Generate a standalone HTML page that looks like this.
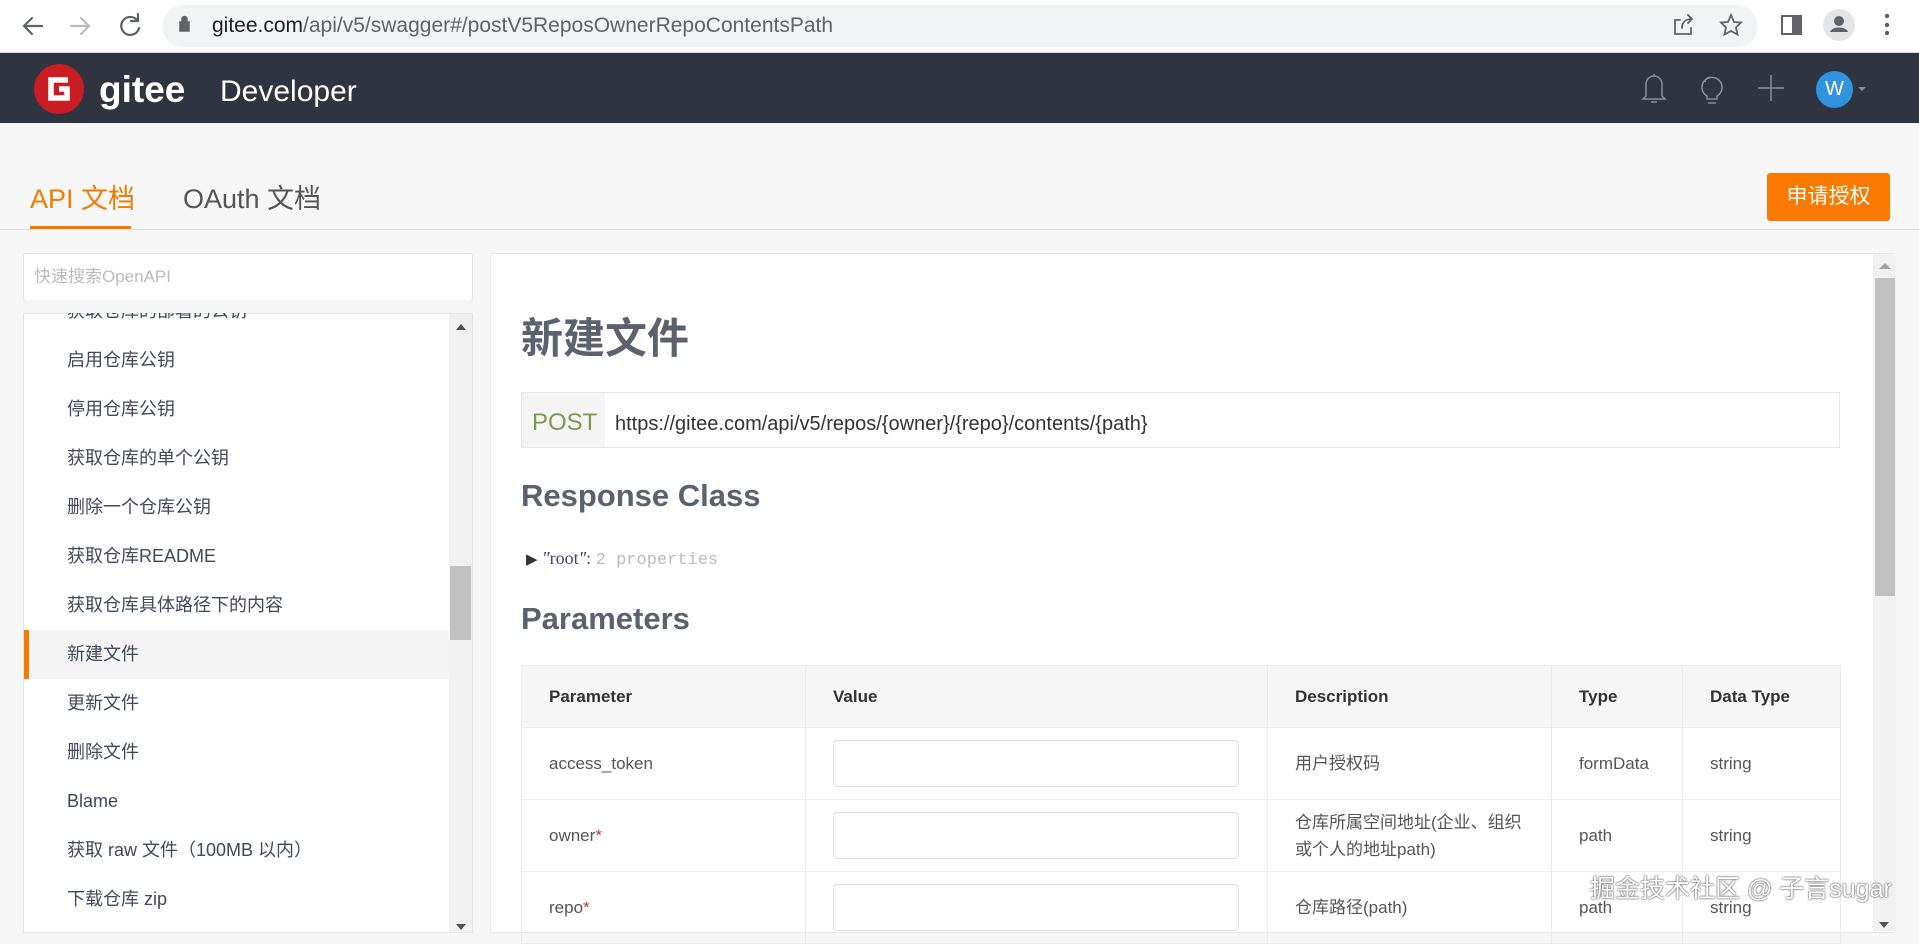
<!DOCTYPE html>
<html><head><meta charset="utf-8"><style>
*{margin:0;padding:0;box-sizing:border-box}
body{width:1919px;height:931px;overflow:hidden;background:#f7f7f7;font-family:"Liberation Sans","Noto Sans CJK SC",sans-serif;position:relative}
.a{position:absolute}
.chrome{left:0;top:0;width:1919px;height:53px;background:#fff;border-bottom:1px solid #dadce0}
.omni{left:162px;top:5px;width:1596px;height:42px;border-radius:21px;background:#f1f3f4}
.nav{left:0;top:53px;width:1919px;height:70px;background:#2f3441}
.item{left:67px;font-size:18px;color:#40485b;line-height:24px;white-space:nowrap}
th,td{border:1px solid #ececec}
</style></head><body>
<div class="a chrome"></div>
<div class="a omni"></div>
<svg class="a" style="left:0;top:0" width="1919" height="53">
<g stroke="#5f6368" stroke-width="2.2" fill="none" stroke-linecap="round">
<path d="M42 26h-17M32 18l-8 8 8 8"/>
<path d="M71 26h17M81 18l8 8-8 8" stroke="#bbb"/>
<path d="M137 20a9 9 0 1 0 2 8M138 14v7h-7"/>
<path d="M1680 20h-5v14h16v-6M1682 28c0-6 4-9 10-9M1688 15l4 4-4 4" stroke-width="1.8"/>
<path d="M1731 15l3 7 7 .5-5 5 1.5 7-6.5-3.5-6.5 3.5 1.5-7-5-5 7-.5z" stroke-width="1.8"/>
<rect x="1782" y="16" width="19" height="18" stroke-width="2"/>
</g>
<rect x="1792" y="16" width="9" height="18" fill="#5f6368"/>
<circle cx="1839" cy="25" r="16" fill="#e3e5e8"/>
<circle cx="1839" cy="21" r="5" fill="#5f6368"/><path d="M1830 32c2-6 16-6 18 0z" fill="#5f6368"/>
<circle cx="1887" cy="16" r="2.2" fill="#5f6368"/><circle cx="1887" cy="25" r="2.2" fill="#5f6368"/><circle cx="1887" cy="33" r="2.2" fill="#5f6368"/>
<path d="M180 22h9v9h-9zM182 22v-3a2.5 2.5 0 0 1 5 0v3" fill="#5f6368" stroke="#5f6368" stroke-width="1.5"/>
</svg>
<div class="a" style="left:212px;top:11px;font-size:21px;color:#202124;line-height:30px">gitee.com<span style="color:#5f6368">/api/v5/swagger#/postV5ReposOwnerRepoContentsPath</span></div>
<div class="a nav"></div>
<svg class="a" style="left:33px;top:63px" width="52" height="52"><circle cx="26" cy="26" r="25" fill="#c71d23"/><path d="M35 17H18v18h16v-9h-8" stroke="#fff" stroke-width="5.5" fill="none"/></svg>
<div class="a" style="left:99px;top:68px;font-size:37px;font-weight:bold;color:#fff;line-height:44px">gitee</div>
<div class="a" style="left:220px;top:74px;font-size:30px;color:#fff;line-height:36px">Developer</div>
<svg class="a" style="left:1630px;top:68px" width="240" height="40" fill="none" stroke="#8a8f9a" stroke-width="1.5">
<path d="M16 28V16a8 8 0 0 1 16 0v12l3 3H13zM21 34h6M24 6v2"/>
<path d="M77 28a10 10 0 1 1 10 0v3H77zM78 35h8"/><path d="M75 14a6 6 0 0 1 5-5"/>
<path d="M128 20h26M141 7v26"/>
<path d="M228 19h8l-4 4z" fill="#8a8f9a" stroke="none"/>
</svg>
<div class="a" style="left:1816px;top:71px;width:37px;height:37px;border-radius:50%;background:#2f93de;color:#fff;font-size:20px;text-align:center;line-height:37px">W</div>
<div class="a" style="left:30px;top:183px;font-size:27px;color:#f57b00;line-height:32px">API 文档</div>
<div class="a" style="left:30px;top:226px;width:101px;height:3px;background:#f57b00"></div>
<div class="a" style="left:183px;top:183px;font-size:27px;color:#555;line-height:32px">OAuth 文档</div>
<div class="a" style="left:0;top:229px;width:1919px;height:1px;background:#ddd"></div>
<div class="a" style="left:1767px;top:173px;width:123px;height:48px;background:#fa7900;border-radius:3px;color:#fff;font-size:21px;text-align:center;line-height:48px">申请授权</div>
<div class="a" style="left:23px;top:253px;width:450px;height:48px;background:#fff;border:1px solid #e2e2e2;border-radius:3px;font-size:17px;color:#bbb;line-height:46px;padding-left:10px">快速搜索OpenAPI</div>
<div class="a" style="left:23px;top:313px;width:450px;height:620px;background:#fff;border:1px solid #e6e6e6;overflow:hidden">
<div class="a" style="left:0;top:316px;width:426px;height:49px;background:#f5f5f5;border-left:5px solid #f57b00"></div>
<div class="a" style="left:425px;top:0;width:24px;height:620px;background:#f1f1f1"></div>
<div class="a" style="left:426px;top:252px;width:21px;height:74px;background:#c1c1c1"></div>
<div class="a" style="left:432px;top:10px;border:5px solid transparent;border-bottom:6px solid #505050;border-top:0"></div>
<div class="a" style="left:432px;top:610px;border:5px solid transparent;border-top:6px solid #505050;border-bottom:0"></div>
</div>
<div class="a item" style="top:299px">获取仓库的部署的公钥</div>
<div class="a" style="left:24px;top:300px;width:448px;height:13px;background:#f7f7f7"></div>
<div class="a item" style="top:348px">启用仓库公钥</div>
<div class="a item" style="top:397px">停用仓库公钥</div>
<div class="a item" style="top:446px">获取仓库的单个公钥</div>
<div class="a item" style="top:495px">删除一个仓库公钥</div>
<div class="a item" style="top:544px">获取仓库README</div>
<div class="a item" style="top:593px">获取仓库具体路径下的内容</div>
<div class="a item" style="top:642px">新建文件</div>
<div class="a item" style="top:691px">更新文件</div>
<div class="a item" style="top:740px">删除文件</div>
<div class="a item" style="top:789px">Blame</div>
<div class="a item" style="top:838px">获取 raw 文件（100MB 以内）</div>
<div class="a item" style="top:887px">下载仓库 zip</div>
<div class="a" style="left:490px;top:253px;width:1406px;height:680px;background:#fff;border:1px solid #e6e6e6;border-radius:3px"></div>
<div class="a" style="left:1873px;top:254px;width:23px;height:677px;background:#f1f1f1"></div>
<div class="a" style="left:1875px;top:278px;width:20px;height:318px;background:#c1c1c1"></div>
<div class="a" style="left:1879px;top:263px;border:6px solid transparent;border-bottom:6px solid #a3a3a3;border-top:0"></div>
<div class="a" style="left:1879px;top:922px;border:5px solid transparent;border-top:6px solid #505050;border-bottom:0"></div>
<div class="a" style="left:521px;top:314px;font-size:42px;font-weight:bold;color:#5a6270;line-height:50px">新建文件</div>
<div class="a" style="left:521px;top:392px;width:1319px;height:56px;border:1px solid #e6e6e6;background:#fff"></div>
<div class="a" style="left:522px;top:393px;width:83px;height:54px;background:#f5f5f5"></div>
<div class="a" style="left:532px;top:408px;font-size:24px;color:#7d9a4e;line-height:30px">POST</div>
<div class="a" style="left:615px;top:412px;font-size:20px;color:#333;line-height:24px">https://gitee.com/api/v5/repos/{owner}/{repo}/contents/{path}</div>
<div class="a" style="left:521px;top:477px;font-size:31px;font-weight:bold;color:#5a6270;line-height:38px">Response Class</div>
<div class="a" style="left:526px;top:546px;font-size:18px;line-height:24px;font-family:'Liberation Serif',serif"><span style="color:#333;font-size:15px">▶</span> <span style="color:#333;font-style:italic">"</span><span style="color:#3c4a6b">root</span><span style="color:#333;font-style:italic">"</span><span style="color:#555">:</span> <span style="color:#bbb;font-family:'Liberation Mono',monospace;font-size:17px">2 properties</span></div>
<div class="a" style="left:521px;top:600px;font-size:31px;font-weight:bold;color:#5a6270;line-height:38px">Parameters</div>
<table class="a" style="left:521px;top:665px;width:1320px;border-collapse:collapse;font-size:17px;color:#333;line-height:26px">
<tr style="height:62px;background:#f7f7f7;font-weight:bold;color:#333"><td style="width:284px;padding-left:27px">Parameter</td><td style="width:462px;padding-left:27px">Value</td><td style="width:284px;padding-left:27px">Description</td><td style="width:131px;padding-left:27px">Type</td><td style="padding-left:27px">Data Type</td></tr>
<tr style="height:72px"><td style="padding-left:27px;color:#555">access_token</td><td style="padding-left:27px"><div style="width:406px;height:47px;border:1px solid #ddd;border-radius:4px"></div></td><td style="padding-left:27px;color:#555">用户授权码</td><td style="padding-left:27px;color:#555">formData</td><td style="padding-left:27px;color:#555">string</td></tr>
<tr style="height:72px"><td style="padding-left:27px;color:#555">owner<span style="color:#c33">*</span></td><td style="padding-left:27px"><div style="width:406px;height:47px;border:1px solid #ddd;border-radius:4px"></div></td><td style="padding-left:27px;padding-right:14px;color:#555;line-height:27px">仓库所属空间地址(企业、组织或个人的地址path)</td><td style="padding-left:27px;color:#555">path</td><td style="padding-left:27px;color:#555">string</td></tr>
<tr style="height:72px"><td style="padding-left:27px;color:#555">repo<span style="color:#c33">*</span></td><td style="padding-left:27px"><div style="width:406px;height:47px;border:1px solid #ddd;border-radius:4px"></div></td><td style="padding-left:27px;color:#555">仓库路径(path)</td><td style="padding-left:27px;color:#555">path</td><td style="padding-left:27px;color:#555">string</td></tr>
</table>
<div class="a" style="left:1590px;top:874px;font-size:25px;color:#fff;line-height:30px;text-shadow:0 0 2px #555,0 0 1px #333">掘金技术社区 @ 子言sugar</div>
</body></html>
